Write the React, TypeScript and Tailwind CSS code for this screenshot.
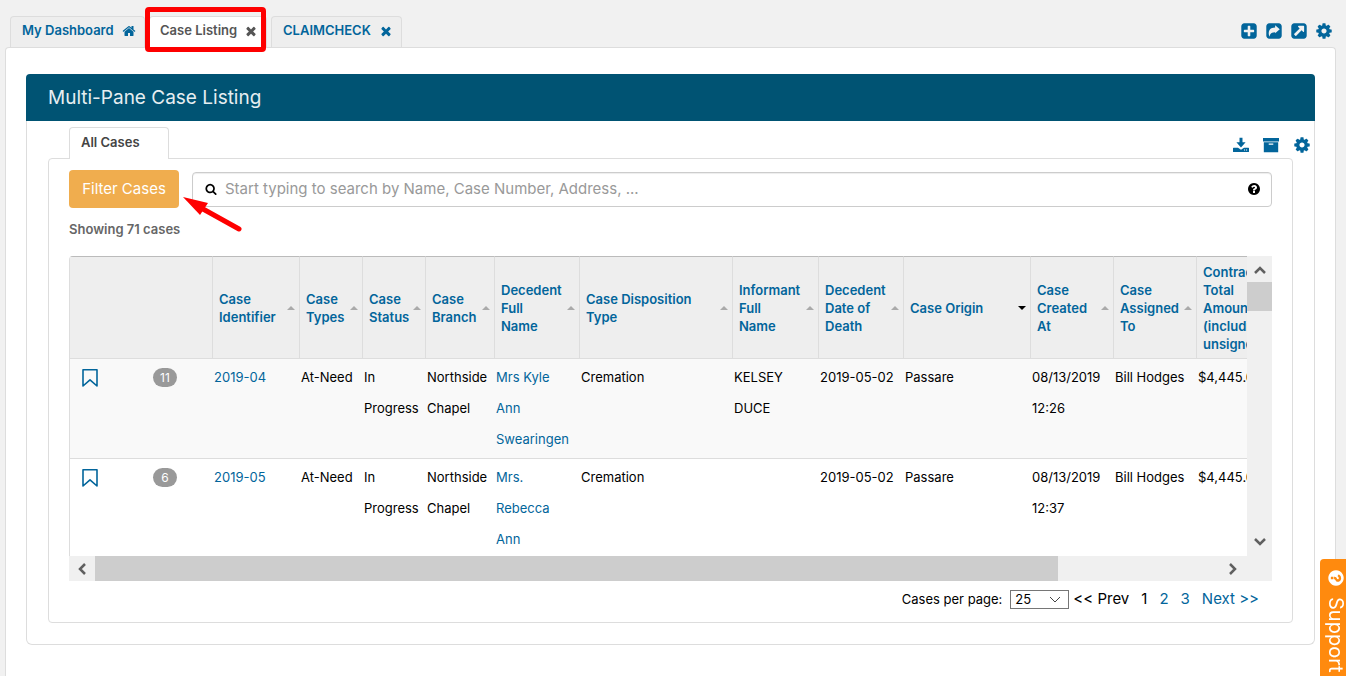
import React from 'react';

const ICONS = {
  home: 'M1472 992v480q0 26-19 45t-45 19h-384v-384h-256v384h-384q-26 0-45-19t-19-45v-480q0-1 .5-3t.5-3l575-474 575 474q1 2 1 6zm223-69l-62 74q-8 9-21 11h-3q-13 0-21-7l-692-577-692 577q-12 8-24 7-13-2-21-11l-62-74q-8-10-7-23.5t11-21.5l719-599q32-26 76-26t76 26l244 204v-195q0-14 9-23t23-9h192q14 0 23 9t9 23v408l219 182q10 8 11 21.5t-7 23.5z',
  times:
    'M1490 1322q0 40-28 68l-136 136q-28 28-68 28t-68-28l-294-294-294 294q-28 28-68 28t-68-28l-136-136q-28-28-28-68t28-68l294-294-294-294q-28-28-28-68t28-68l136-136q28-28 68-28t68 28l294 294 294-294q28-28 68-28t68 28l136 136q28 28 28 68t-28 68l-294 294 294 294q28 28 28 68z',
  cog: 'M1152 896q0-106-75-181t-181-75-181 75-75 181 75 181 181 75 181-75 75-181zm512-109v222q0 12-8 23t-20 13l-185 28q-19 54-39 91 35 50 107 138 10 12 10 25t-9 23q-27 37-99 108t-94 71q-12 0-26-9l-138-108q-44 23-91 38-16 136-29 186-7 28-36 28h-222q-14 0-24.5-8.5t-11.5-21.5l-28-184q-49-16-90-37l-141 107q-10 9-25 9-14 0-25-11-126-114-165-168-7-10-7-23 0-12 8-23 15-21 51-66.5t54-70.5q-27-50-41-99l-183-27q-13-2-21-12.5t-8-23.5v-222q0-12 8-23t19-13l186-28q14-46 39-92-40-57-107-138-10-12-10-24 0-10 9-23 26-36 98.5-107.5t94.5-71.5q13 0 26 10l138 107q44-23 91-38 16-136 29-186 7-28 36-28h222q14 0 24.5 8.5t11.5 21.5l28 184q49 16 90 37l142-107q9-9 24-9 13 0 25 10 129 119 165 170 7 8 7 22 0 12-8 23-15 21-51 66.5t-54 70.5q26 50 41 98l183 28q13 2 21 12.5t8 23.5z',
  search:
    'M1216 832q0-185-131.5-316.5t-316.5-131.5-316.5 131.5-131.5 316.5 131.5 316.5 316.5 131.5 316.5-131.5 131.5-316.5zm512 832q0 52-38 90t-90 38q-54 0-90-38l-343-342q-179 124-399 124-143 0-273.5-55.5t-225-150-150-225-55.5-273.5 55.5-273.5 150-225 225-150 273.5-55.5 273.5 55.5 225 150 150 225 55.5 273.5q0 220-124 399l343 343q37 37 37 90z',
  question:
    'M1024 1376v-192q0-14-9-23t-23-9h-192q-14 0-23 9t-9 23v192q0 14 9 23t23 9h192q14 0 23-9t9-23zm256-672q0-88-55.5-163t-138.5-116-170-41q-243 0-371 213-15 24 8 42l132 100q7 6 19 6 16 0 25-12 53-68 86-92 34-24 86-24 48 0 85.5 26t37.5 59q0 38-20 61t-68 45q-63 28-115.5 86.5t-52.5 125.5v36q0 14 9 23t23 9h192q14 0 23-9t9-23q0-19 21.5-49.5t54.5-49.5q32-18 49-28.5t46-35 44.5-48 28-60.5 12.5-81zm384 192q0 209-103 385.5t-279.5 279.5-385.5 103-385.5-103-279.5-279.5-103-385.5 103-385.5 279.5-279.5 385.5-103 385.5 103 279.5 279.5 103 385.5z',
  plus: 'M1408 960v-128q0-26-19-45t-45-19h-320v-320q0-26-19-45t-45-19h-128q-26 0-45 19t-19 45v320h-320q-26 0-45 19t-19 45v128q0 26 19 45t45 19h320v320q0 26 19 45t45 19h128q26 0 45-19t19-45v-320h320q26 0 45-19t19-45zm256-544v960q0 119-84.5 203.5t-203.5 84.5h-960q-119 0-203.5-84.5t-84.5-203.5v-960q0-119 84.5-203.5t203.5-84.5h960q119 0 203.5 84.5t84.5 203.5z',
  share:
    'M1010 1120l460-400-460-400v230c-420 0-640 220-640 560 0 130 40 250 110 330 0-260 130-430 530-430zM1664 416v960q0 119-84.5 203.5t-203.5 84.5h-960q-119 0-203.5-84.5t-84.5-203.5v-960q0-119 84.5-203.5t203.5-84.5h960q119 0 203.5 84.5t84.5 203.5z',
  external:
    'M1408 928v-480q0-26-19-45t-45-19h-480q-42 0-59 39-17 41 14 70l144 144-534 534q-19 19-19 45t19 45l102 102q19 19 45 19t45-19l534-534 144 144q18 19 45 19 12 0 25-5 39-17 39-59zm256-512v960q0 119-84.5 203.5t-203.5 84.5h-960q-119 0-203.5-84.5t-84.5-203.5v-960q0-119 84.5-203.5t203.5-84.5h960q119 0 203.5 84.5t84.5 203.5z',
  download:
    'M60 1210h500l336 230 336-230h500q60 0 60 60v340q0 60-60 60h-1672q-60 0-60-60v-340q0-60 60-60zM1230 1400v110h120v-110zM1460 1400v110h120v-110zM730 80h332v520h350l-516 580-516-580h350z',
  archive: 'M0 120h1792v380h-1792zM90 590h1612v1130h-1612zM640 740v130h512v-130z',
};

const LINK = 'text-[#02659b]';

function Icon({ name, className = 'size-4' }: { name: keyof typeof ICONS; className?: string }) {
  return (
    <svg viewBox="0 0 1792 1792" className={`shrink-0 fill-current ${className}`} aria-hidden="true">
      <path fillRule="evenodd" d={ICONS[name]} />
    </svg>
  );
}

function Chevron({ className = '' }: { className?: string }) {
  return (
    <svg viewBox="0 0 12 12" className={`size-3 fill-none stroke-[#606060] ${className}`} aria-hidden="true">
      <path d="M1 9l5-5 5 5" strokeWidth="2.5" />
    </svg>
  );
}

// Column widths are shared by the header and every row
const columns = [
  { label: 'Case\nIdentifier', width: 'w-[87px]' },
  { label: 'Case\nTypes', width: 'w-[63px]' },
  { label: 'Case\nStatus', width: 'w-[63px]' },
  { label: 'Case\nBranch', width: 'w-[69px]' },
  { label: 'Decedent\nFull\nName', width: 'w-[85px]' },
  { label: 'Case Disposition\nType', width: 'w-[153px]' },
  { label: 'Informant\nFull\nName', width: 'w-[86px]' },
  { label: 'Decedent\nDate of\nDeath', width: 'w-[85px]' },
  { label: 'Case Origin', width: 'w-[127px]', sorted: true },
  { label: 'Case\nCreated\nAt', width: 'w-[83px]' },
  { label: 'Case\nAssigned\nTo', width: 'w-[83px]' },
  { label: 'Contract\nTotal\nAmount\n(including\nunsigned)', width: 'w-[110px]' },
];

const cases = [
  {
    count: 11,
    id: '2019-04',
    name: 'Mrs Kyle Ann Swearingen',
    informant: 'KELSEY DUCE',
    created: '08/13/2019 12:26',
  },
  {
    count: 6,
    id: '2019-05',
    name: 'Mrs. Rebecca Ann',
    informant: '',
    created: '08/13/2019 12:37',
  },
];

const TopTabs = () => (
  <header className="flex items-end justify-between pr-[13px] pl-[10px] pt-4">
    <nav className="flex gap-1 text-[13px] font-semibold">
      <a href="#dashboard" className={`flex h-[31px] w-[135px] items-center justify-between rounded-t border border-b-0 border-[#ddd] bg-[#eee] pr-2 pb-0.5 pl-[11px] ${LINK}`}>
        My Dashboard <Icon name="home" className="size-[14px]" />
      </a>
      <div className="relative -mb-px flex h-8 w-[118px] items-center justify-between rounded-t border border-b-0 border-[#ddd] bg-white pr-2 pb-[3px] pl-[10px] text-[#555]">
        <a href="#cases" className="whitespace-nowrap">Case Listing</a>
        <button aria-label="Close Case Listing"><Icon name="times" className="size-[14px]" /></button>
        {/* Callout around the active tab */}
        <span className="pointer-events-none absolute -top-[10px] right-0 -bottom-1 -left-[5px] rounded-sm border-[5px] border-[#fe0000]" />
      </div>
      <div className={`flex h-[31px] w-[131px] items-center justify-between rounded-t border border-b-0 border-[#ddd] bg-[#eee] pr-2 pb-0.5 pl-[11px] ${LINK}`}>
        <a href="#claimcheck">CLAIMCHECK</a>
        <button aria-label="Close CLAIMCHECK"><Icon name="times" className="size-[14px]" /></button>
      </div>
    </nav>
    <div className={`flex items-center gap-[7px] pb-[7px] ${LINK}`}>
      <button aria-label="Add"><Icon name="plus" className="size-[18px]" /></button>
      <button aria-label="Share"><Icon name="share" className="size-[18px]" /></button>
      <button aria-label="Open in new window"><Icon name="external" className="size-[18px]" /></button>
      <button aria-label="Settings"><Icon name="cog" className="size-[18px]" /></button>
    </div>
  </header>
);

const SearchRow = () => (
  <div className="flex items-center gap-[13px]">
    <div className="relative">
      <button className="h-[38px] w-[110px] rounded bg-[#f0ad4e] text-[15px] text-white">Filter Cases</button>
      {/* Arrow pointing at the filter button */}
      <svg viewBox="0 0 60 38" className="pointer-events-none absolute top-6 left-[114px] z-10 h-[38px] w-[60px]" aria-hidden="true">
        <path d="M20 15L56 35" stroke="#fe0000" strokeWidth="5" strokeLinecap="round" />
        <path d="M0 3l25 6-8 12z" fill="#fe0000" />
      </svg>
    </div>
    <label className="flex h-[35px] flex-1 items-center gap-2 rounded border border-[#ccc] bg-white pr-[10px] pl-3 shadow-[inset_0_1px_1px_rgba(0,0,0,0.075)]">
      <Icon name="search" className="size-3" />
      <input
        type="text"
        aria-label="Search cases"
        placeholder="Start typing to search by Name, Case Number, Address, ..."
        className="min-w-0 flex-1 text-[15px] outline-none placeholder:text-[#999]"
      />
      <Icon name="question" className="size-[14px]" />
    </label>
  </div>
);

const CaseTable = () => (
  <table className="w-[1237px] table-fixed border-separate border-spacing-0 border-l border-[#ddd] text-[13px]">
    <thead>
      <tr className="h-[103px] bg-[#eee]">
        <th className="w-[142px] border-y border-t-[#bbb] border-b-[#ddd]" aria-label="Bookmark and tasks" />
        {columns.map((col) => (
          <th
            key={col.label}
            className={`${col.width} border-y border-l border-t-[#bbb] border-b-[#ddd] border-l-[#ddd] pr-1 pl-1.5 text-left leading-[18px] font-semibold`}
          >
            <button className={`flex w-full items-center justify-between text-left ${LINK}`}>
              <span className="min-w-0 whitespace-pre">{col.label}</span>
              <svg viewBox="0 0 8 4" className="-ml-1 h-1 w-2 shrink-0" aria-hidden="true">
                {col.sorted ? <path d="M0 0h8L4 4z" fill="#000" /> : <path d="M0 4h8L4 0z" fill="#aaa" />}
              </svg>
            </button>
          </th>
        ))}
      </tr>
    </thead>
    <tbody>
      {cases.map((row) => (
        <tr
          key={row.id}
          className="h-[100px] odd:bg-[#f9f9f9] [&>td]:border-b [&>td]:border-[#ddd] [&>td]:pt-[3px] [&>td]:pr-0 [&>td]:pl-0.5 [&>td]:align-top [&>td]:leading-[31px]"
        >
          <td>
            <div className="flex h-[31px] items-center pl-[9px]">
              <button aria-label={`Bookmark ${row.id}`}>
                <svg viewBox="0 0 18 20" className={`h-5 w-[18px] fill-none stroke-current ${LINK}`} aria-hidden="true">
                  <path d="M2 1.8h14v16.2l-7-6.2-7 6.2z" strokeWidth="1.6" strokeLinejoin="round" />
                </svg>
              </button>
              <span className="ml-[54px] flex h-[19px] w-6 items-center justify-center rounded-full bg-[#999] text-xs text-white">
                {row.count}
              </span>
            </div>
          </td>
          <td><a href="#case" className={LINK}>{row.id}</a></td>
          <td className="whitespace-nowrap">At-Need</td>
          <td>In Progress</td>
          <td>Northside Chapel</td>
          <td><a href="#case" className={`block pr-2 ${LINK}`}>{row.name}</a></td>
          <td>Cremation</td>
          <td>{row.informant}</td>
          <td className="whitespace-nowrap">2019-05-02</td>
          <td>Passare</td>
          <td>{row.created}</td>
          <td className="whitespace-nowrap">Bill Hodges</td>
          <td>$4,445.00</td>
        </tr>
      ))}
    </tbody>
  </table>
);

const Pagination = () => (
  <div className="mt-[7px] flex items-center justify-end pr-[13px] text-[15px] leading-[22px]">
    <label htmlFor="per-page" className="mr-2 text-[13px]">Cases per page:</label>
    <span className="relative mr-1 flex items-center">
      <select id="per-page" defaultValue="25" className="h-[19px] w-[59px] appearance-none border border-[#767676] bg-white pl-1 text-[13px] leading-4">
        <option>25</option>
        <option>50</option>
        <option>100</option>
      </select>
      <svg viewBox="0 0 12 7" className="pointer-events-none absolute right-2 h-[7px] w-3 fill-none stroke-[#444]" aria-hidden="true">
        <path d="M1 1l5 5 5-5" />
      </svg>
    </span>
    <span>&lt;&lt; Prev</span>
    <span className="ml-3">1</span>
    <a href="#page-2" className={`ml-3 ${LINK}`}>2</a>
    <a href="#page-3" className={`ml-3 ${LINK}`}>3</a>
    <a href="#next" className={`ml-3 ${LINK}`}>Next &gt;&gt;</a>
  </div>
);

export default function App() {
  return (
    <div className="flex min-h-screen flex-col overflow-x-hidden bg-[#f1f1f1] font-['Inter','Liberation_Sans',sans-serif] text-black">
      <TopTabs />
      <main className="mr-[10px] ml-[5px] flex-1 rounded-t border border-b-0 border-[#ddd] bg-white px-5 pt-[26px] pb-[31px]">
        <section className="rounded-md border border-t-0 border-[#ddd]">
          <h1 className="-mx-px flex h-[47px] items-center rounded-t bg-[#005373] pt-0.5 pl-[22px] text-[19px] text-[#e6eef1]">
            Multi-Pane Case Listing
          </h1>
          <div className="px-[21px] pb-[21px]">
            <div className="-mb-px flex items-end justify-between pt-1.5 pl-[21px]">
              <a href="#all" className="z-10 flex h-8 w-[100px] items-center rounded-t border border-b-0 border-[#ddd] bg-white pb-0.5 pl-[11px] text-[13px] font-semibold text-[#444]">
                All Cases
              </a>
              <div className={`-mr-[18px] flex items-center gap-[14px] pb-[5px] ${LINK}`}>
                <button aria-label="Download"><Icon name="download" className="size-4" /></button>
                <button aria-label="Archive"><Icon name="archive" className="size-4" /></button>
                <button aria-label="Pane settings"><Icon name="cog" className="size-[18px]" /></button>
              </div>
            </div>
            <div className="rounded border border-[#ddd] px-5 pt-[11px] pb-3">
              <SearchRow />
              <p className="mt-3 text-[13px] leading-[18px] font-semibold text-[#666]">Showing 71 cases</p>
              <div className="mt-[18px] grid h-[325px] grid-cols-[1fr_25px] grid-rows-[1fr_25px]">
                <div className="overflow-hidden rounded-tl">
                  <CaseTable />
                </div>
                <div className="row-span-2 flex flex-col items-center bg-[#f0f0f0]">
                  <button aria-label="Scroll up" className="flex h-[26px] items-center pt-0.5"><Chevron /></button>
                  <div className="h-[29px] w-full bg-[#cdcdcd]" />
                  <button aria-label="Scroll down" className="mt-auto mb-[26px] flex h-[26px] items-center"><Chevron className="rotate-180" /></button>
                </div>
                <div className="flex items-center bg-[#f0f0f0]">
                  <button aria-label="Scroll left" className="flex w-[26px] justify-center"><Chevron className="-rotate-90" /></button>
                  <div className="flex h-full flex-1">
                    <div className="w-6/7 bg-[#cdcdcd]" />
                  </div>
                  <button aria-label="Scroll right" className="flex w-[28px] justify-center"><Chevron className="rotate-90" /></button>
                </div>
              </div>
              <Pagination />
            </div>
          </div>
        </section>
      </main>
      <button className="fixed right-0 bottom-0 flex h-[117px] w-[26px] items-center gap-2.5 rounded-tl bg-[#ff8a0e] pt-2.5 pl-1.5 text-xl leading-5 text-white [writing-mode:vertical-rl]">
        <Icon name="question" className="size-[18px] rotate-90" />
        Support
      </button>
    </div>
  );
}
